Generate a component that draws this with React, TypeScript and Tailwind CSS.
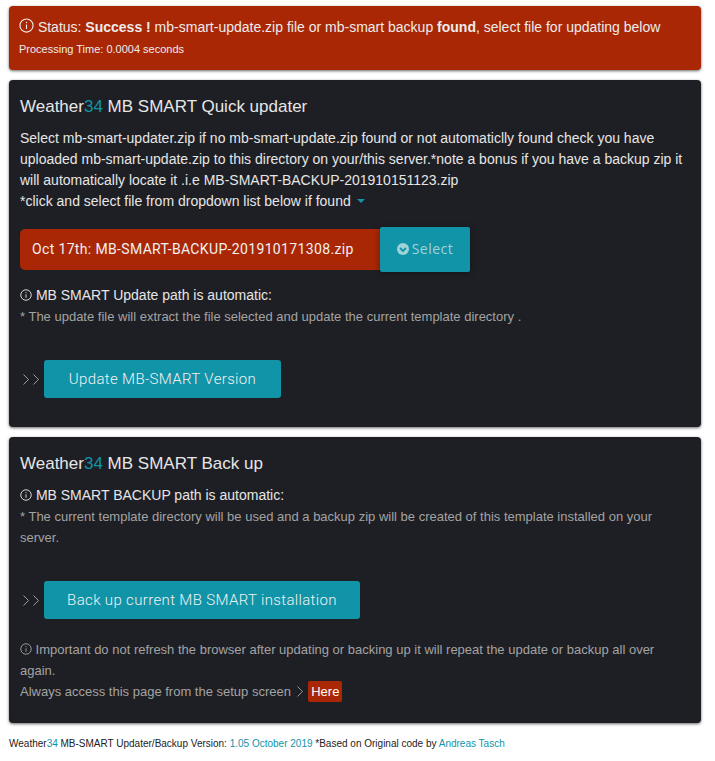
const sans = { fontFamily: '"Liberation Sans", Arial, sans-serif' };

function InfoIcon({ size = 12 }: { size?: number }) {
  return (
    <svg width={size} height={size} viewBox="0 0 24 24" fill="none" stroke="currentColor" strokeWidth="1.8" className="inline-block align-[-1px]">
      <circle cx="12" cy="12" r="10.5" />
      <path d="M12 10.5v7" />
      <path d="M12 6.2v2" />
    </svg>
  );
}

function Chevron({ className = '' }: { className?: string }) {
  return (
    <svg width="6" height="11" viewBox="0 0 6 11" fill="none" stroke="currentColor" strokeWidth="0.9" className={className}>
      <path d="M0.5 0.5 5.5 5.5 0.5 10.5" />
    </svg>
  );
}

function Brand() {
  return <>Weather<span className="text-[#1193a8]">34</span></>;
}

function ActionRow({ label, width }: { label: string; width: string }) {
  return (
    <div className="flex items-center h-[38px]">
      <div className="flex gap-[4px] w-[24px] pl-[3px] text-[#aaaaaa]">
        <Chevron />
        <Chevron />
      </div>
      <button className={`${width} h-[38px] pt-[1px] bg-[#1193a8] rounded-[3px] text-[#f2f2f2] text-[15px] tracking-[0.35px] font-light font-['Roboto',sans-serif]`}>{label}</button>
    </div>
  );
}

export default function App() {
  return (
    <div className="bg-white w-[715px] h-[761px] overflow-hidden px-[9px] pt-[6px] text-[14px]" style={sans}>
      <div className="w-[692px] h-[64px] bg-[#a92705] rounded-[4px] shadow-[0_1px_3px_rgba(0,0,0,0.6)] px-[10px] pt-[12px] text-[#ececec]">
        <div className="h-[18px] leading-[18px]"><InfoIcon size={15} /> Status: <b>Success !</b> mb-smart-update.zip file or mb-smart backup <b>found</b>, select file for updating below</div>
        <div className="mt-[6px] text-[11px] leading-[14px]">Processing Time: 0.0004 seconds</div>
      </div>

      <div className="mt-[10px] w-[692px] h-[347px] bg-[#1e1f24] rounded-[4px] shadow-[0_1px_3px_rgba(0,0,0,0.6)] px-[11px] pt-[17px] text-[#e6e6e6]">
        <h1 className="text-[17px] leading-[20px]"><Brand /> MB SMART Quick updater</h1>
        <p className="mt-[11px] leading-[21px]">
          Select mb-smart-updater.zip if no mb-smart-update.zip found or not automaticlly found check you have uploaded mb-smart-update.zip to this directory on your/this server.*note a bonus if you have a backup zip it will automatically locate it .i.e MB-SMART-BACKUP-201910151123.zip
          <br />*click and select file from dropdown list below if found <span className="inline-block ml-[2px] align-[3px] border-x-[4.5px] border-t-[4.5px] border-x-transparent border-t-[#1193a8]" />
        </p>
        <div className="mt-[15px] flex items-center h-[45px]">
          <div className="w-[360px] h-[41px] bg-[#a92705] rounded-l-[5px] flex items-center pl-[12px] text-[14px] tracking-[0.35px] text-[#f0f0f0] font-['Roboto',sans-serif]">Oct 17th: MB-SMART-BACKUP-201910171308.zip</div>
          <div className="w-[90px] h-[45px] pb-[2px] bg-[#1193a8] rounded-[2px] shadow-[0_1px_6px_rgba(0,0,0,0.4)] flex items-center justify-center gap-[3px] text-[#9fd3d8] text-[14px] tracking-[0.5px] font-['Open_Sans',sans-serif]">
            <svg width="12" height="12" viewBox="0 0 12 12" className="mt-[1px]">
              <circle cx="6" cy="6" r="6" fill="#9fd3d8" />
              <path d="M3 5 6 8 9 5" fill="none" stroke="#1193a8" strokeWidth="1.8" />
            </svg>
            Select
          </div>
        </div>
        <div className="mt-[14px] leading-[18px]"><InfoIcon /> MB SMART Update path is automatic:</div>
        <div className="mt-[4px] text-[13px] leading-[18px] text-[#a3a3a3]">* The update file will extract the file selected and update the current template directory .</div>
        <div className="mt-[34px]"><ActionRow label="Update MB-SMART Version" width="w-[237px]" /></div>
      </div>

      <div className="mt-[10px] w-[692px] h-[286px] bg-[#1e1f24] rounded-[4px] shadow-[0_1px_3px_rgba(0,0,0,0.6)] px-[11px] pt-[17px] text-[#e6e6e6]">
        <h1 className="text-[17px] leading-[20px]"><Brand /> MB SMART Back up</h1>
        <div className="mt-[12px] leading-[18px]"><InfoIcon /> MB SMART BACKUP path is automatic:</div>
        <div className="mt-[2px] text-[13px] leading-[21px] text-[#a3a3a3]">* The current template directory will be used and a backup zip will be created of this template installed on your server.</div>
        <div className="mt-[33px]"><ActionRow label="Back up current MB SMART installation" width="w-[316px]" /></div>
        <div className="mt-[20px] text-[13px] leading-[21px] text-[#a3a3a3]">
          <InfoIcon /> Important do not refresh the browser after updating or backing up it will repeat the update or backup all over again.
          <br />Always access this page from the setup screen <Chevron className="inline-block mx-[2px] align-[-1px]" /> <span className="inline-block bg-[#a92705] rounded-[2px] px-[3px] text-white leading-[21px]">Here</span>
        </div>
      </div>

      <div className="mt-[15px] text-[10px] leading-[12px] text-[#222222]">
        <Brand /> MB-SMART Updater/Backup Version: <span className="text-[#1193a8]">1.05 October 2019</span> *Based on Original code by <span className="text-[#1193a8]">Andreas Tasch</span>
      </div>
    </div>
  );
}
